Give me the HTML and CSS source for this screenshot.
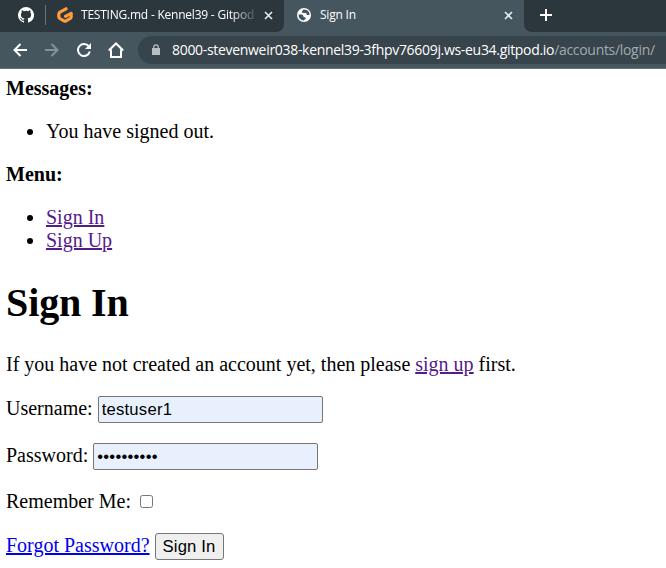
FILE: index.html
```html
<!DOCTYPE html>
<html lang="en">
<head>
<meta charset="utf-8">
<title>Sign In</title>
<link rel="stylesheet" href="styles.css">
</head>
<body>
<header class="browser">
  <div class="tabs">
    <div class="tab pinned">
      <svg width="16" height="16" viewBox="0 0 16 16" fill="#fff"><path d="M8 0a8 8 0 0 0-2.53 15.59c.4.07.55-.17.55-.38v-1.49c-2.01.37-2.53-.49-2.69-.94-.09-.23-.48-.94-.82-1.13-.28-.15-.68-.52-.01-.53.63-.01 1.08.58 1.23.82.72 1.21 1.87.87 2.33.66.07-.52.28-.87.51-1.07-1.78-.2-3.64-.89-3.64-3.95 0-.87.31-1.59.82-2.15-.08-.2-.36-1.02.08-2.12 0 0 .67-.21 2.2.82a7.6 7.6 0 0 1 4 0c1.53-1.04 2.2-.82 2.2-.82.44 1.1.16 1.92.08 2.12.51.56.82 1.27.82 2.15 0 3.07-1.87 3.75-3.65 3.95.29.25.54.73.54 1.48v2.2c0 .21.15.46.55.38A8 8 0 0 0 8 0Z"/></svg>
    </div>
    <div class="tab background">
      <svg width="16" height="16" viewBox="0 0 16 16" fill="none" stroke="#ff9d3c" stroke-width="3.2" stroke-linecap="round" stroke-linejoin="round"><path d="M9 1.800 3 5.200Q1.800 6 1.800 7.300v2.400q0 1.200 1 1.800l4.100 2.400q1.100.6 2.200 0l4-2.400q1.100-.6 1.100-1.800V6.300L8.500 9.300"/></svg>
      <span class="title faded">TESTING.md - Kennel39 - Gitpod</span>
      <svg class="close" width="9" height="9" viewBox="0 0 9 9"><path d="m1 1 7 7M8 1 1 8"/></svg>
    </div>
    <div class="tab active">
      <svg width="14" height="14" viewBox="0 0 14 14"><circle cx="7" cy="7" r="7" fill="#fff"/><path fill="#45565f" d="M6.500 1.500 5 3.200Q4.600 4.600 6 5h2.500q1 .1 1 1t1.200.9h1.800Q12.600 3 9.500 1.900 8 1.300 6.500 1.500ZM1.500 6.500h3.300q1.500.1 1.500 1.500t1.400 1.300q1.300.2 1.100 1.300T7.300 11.500v1Q4.500 12.700 2.700 10.500 1.500 8.800 1.500 6.500Z"/></svg>
      <span class="title">Sign In</span>
      <svg class="close" width="9" height="9" viewBox="0 0 9 9"><path d="m1 1 7 7M8 1 1 8"/></svg>
    </div>
    <div class="tab new-tab">
      <svg width="12" height="12" viewBox="0 0 12 12" stroke="#fff" stroke-width="2"><path d="M6 0v12M0 6h12"/></svg>
    </div>
  </div>
  <div class="toolbar">
    <svg width="14" height="14" viewBox="0 0 14 14" class="nav"><path d="M14 7H1.500M7.500 1 1.500 7l6 6"/></svg>
    <svg width="14" height="14" viewBox="0 0 14 14" class="nav disabled"><path d="M0 7h12.500M6.500 1l6 6-6 6"/></svg>
    <svg width="14" height="14" viewBox="0 0 14 14" class="nav"><path d="M11.800 3.400A6 6 0 1 0 12.800 8.600"/><path class="solid" d="M14 0v6H8Z"/></svg>
    <svg width="16" height="16" viewBox="0 0 16 16" class="nav"><path d="M.8 8.500 8 1.500l7.200 7M3 7.500V15h10V7.500"/></svg>
    <div class="address">
      <svg width="8" height="12" viewBox="0 0 8 12"><path fill="#b8bfc3" d="M0 4h8v7H0Z"/><path fill="none" stroke="#b8bfc3" stroke-width="1.200" d="M1.800 4.500V3a2.200 2.200 0 0 1 4.400 0v1.500"/></svg>
      <span class="host">8000-stevenweir038-kennel39-3fhpv76609j.ws-eu34.gitpod.io</span><span class="path">/accounts/login/</span>
    </div>
  </div>
</header>
<main>
  <div><strong>Messages:</strong></div>
  <ul><li>You have signed out.</li></ul>
  <div><strong>Menu:</strong></div>
  <ul>
    <li><a class="visited" href="#">Sign In</a></li>
    <li><a class="visited" href="#">Sign Up</a></li>
  </ul>
  <h1>Sign In</h1>
  <p>If you have not created an account yet, then please <a class="visited" href="#">sign up</a> first.</p>
  <form>
    <p><label for="user">Username:</label> <input class="field" id="user" type="text" value="testuser1"></p>
    <p><label for="pass">Password:</label> <input class="field" id="pass" type="password" value="abcdefghij"></p>
    <p><label for="remember">Remember Me:</label> <input class="check" id="remember" type="checkbox"></p>
    <a class="forgot" href="#">Forgot Password?</a> <button type="button">Sign In</button>
  </form>
</main>
</body>
</html>
```
FILE: styles.css
```css
* { box-sizing: border-box; }
body {
  margin: 0;
  background: #fff;
  color: #000;
  font: 20px/23px "Liberation Serif", serif;
  overflow: hidden;
}
.browser {
  height: 69px;
  background: #45565f;
  border-bottom: 1px solid #65747c;
  font-family: "Open Sans", sans-serif;
  color: #fff;
}
.tabs { display: flex; height: 32px; }
.tab { display: flex; align-items: center; height: 32px; padding-bottom: 2px; background: #2c373d; }
.pinned { width: 46px; padding-left: 18px; background: linear-gradient(#68757b, #68757b) 45px 5px / 1px 20px no-repeat #2c373d; }
.background { width: 238px; padding: 0 11px 2px 11px; border-bottom-right-radius: 8px; }
.active { width: 240px; padding: 0 11px 2px 13px; background: #45565f; border-top-right-radius: 8px; }
.new-tab { flex: 1; padding-left: 16px; border-bottom-left-radius: 8px; }
.title { margin-left: 8px; font-size: 12px; line-height: 16px; letter-spacing: -0.22px; white-space: nowrap; overflow: hidden; }
.active .title { margin-left: 9px; }
.faded {
  width: 174px;
  -webkit-mask-image: linear-gradient(90deg, #000 150px, transparent 178px);
  mask-image: linear-gradient(90deg, #000 150px, transparent 178px);
}
.close { margin-left: auto; fill: none; stroke: #e8ebed; stroke-width: 1.6; }
.toolbar { display: flex; align-items: center; height: 36px; padding-left: 13px; gap: 18px; }
.nav { flex: none; fill: none; stroke: #fff; stroke-width: 2; }
.nav.disabled { stroke: #86929a; }
.nav .solid { fill: #fff; stroke: none; }
.nav:nth-of-type(4) { margin-left: -1px; }
.address {
  display: flex;
  align-items: center;
  flex: 1;
  height: 28px;
  margin-left: -4px;
  padding-left: 14px;
  background: #37444b;
  border-radius: 14px 0 0 14px;
  font-size: 14px;
  line-height: 20px;
  white-space: nowrap;
}
.address svg { flex: none; margin-right: 12px; }
.host, .path { letter-spacing: -0.31px; }
.path { color: #a2abb0; }
main { padding: 8px 6px 0; }
ul { margin: 20px 0; padding-left: 40px; }
h1 { margin: 27px 0; font-size: 40px; line-height: 47px; letter-spacing: -0.1px; }
p { margin: 20px 0; }
a { color: #00e; text-decoration: underline; text-decoration-thickness: 2px; text-underline-offset: 1px; }
a.visited { color: #551a8b; }
.field {
  width: 225px;
  height: 27px;
  margin: 0;
  padding: 1px 3px;
  border: 1px solid #767676;
  border-radius: 2px;
  background: #e8f0fe;
  color: #000;
  font: 16.667px "Liberation Sans", sans-serif;
  letter-spacing: 0.22px;
}
.check { width: 13px; height: 13px; margin: 3px 4px; vertical-align: 0; }
button {
  width: 69px;
  height: 27px;
  margin: 0;
  padding: 1px 6px;
  border: 1px solid #767676;
  border-radius: 3px;
  background: #efefef;
  color: #000;
  font: 16.667px "Liberation Sans", sans-serif;
  letter-spacing: 0.15px;
}
```
